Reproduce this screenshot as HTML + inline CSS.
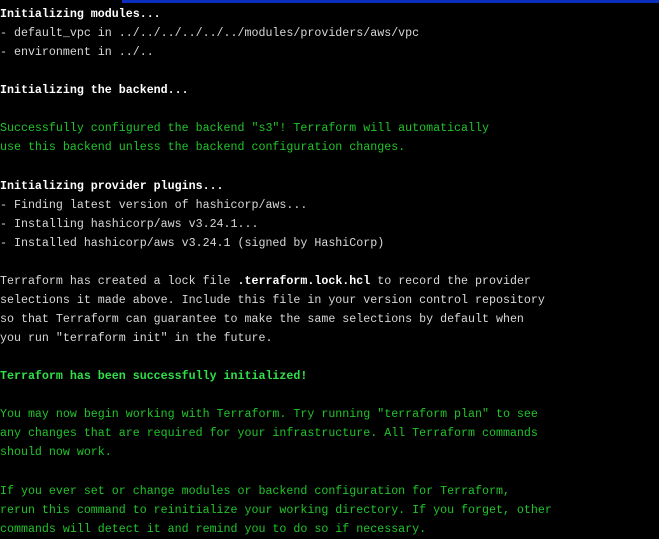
<!DOCTYPE html>
<html><head><meta charset="utf-8"><style>
html,body{margin:0;padding:0;background:#000;width:659px;height:534px;overflow:hidden}
.bar{position:absolute;left:122px;top:0;width:537px;height:3px;background:#0a2fbf}
pre{position:absolute;left:0;top:5px;margin:0;font-family:"Liberation Mono",monospace;font-size:11.65px;line-height:19.07px;color:#d8d8d8;white-space:pre}
.b{font-weight:bold;color:#fff}
.g{color:#21c42a}
.gb{color:#2fe04a;font-weight:bold}
</style></head><body>
<div class="bar"></div>
<pre><span class="b">Initializing modules...</span>
- default_vpc in ../../../../../../modules/providers/aws/vpc
- environment in ../..

<span class="b">Initializing the backend...</span>

<span class="g">Successfully configured the backend "s3"! Terraform will automatically
use this backend unless the backend configuration changes.</span>

<span class="b">Initializing provider plugins...</span>
- Finding latest version of hashicorp/aws...
- Installing hashicorp/aws v3.24.1...
- Installed hashicorp/aws v3.24.1 (signed by HashiCorp)

Terraform has created a lock file <span class="b">.terraform.lock.hcl</span> to record the provider
selections it made above. Include this file in your version control repository
so that Terraform can guarantee to make the same selections by default when
you run "terraform init" in the future.

<span class="gb">Terraform has been successfully initialized!</span>

<span class="g">You may now begin working with Terraform. Try running "terraform plan" to see
any changes that are required for your infrastructure. All Terraform commands
should now work.

If you ever set or change modules or backend configuration for Terraform,
rerun this command to reinitialize your working directory. If you forget, other
commands will detect it and remind you to do so if necessary.</span></pre>
</body></html>
